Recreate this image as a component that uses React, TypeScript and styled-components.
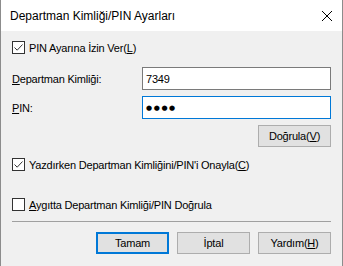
import React from "react";
import styled, { createGlobalStyle } from "styled-components";

const GlobalStyle = createGlobalStyle`
    html, body {
        margin: 0;
        padding: 0;
        background: #f0f0f0;
    }
    body {
        font-family: "Liberation Sans", Arial, sans-serif;
        color: #000;
    }
`;

const Window = styled.div`
    width: 343px;
    height: 266px;
    box-sizing: border-box;
    border-left: 1px solid #8c8c8c;
    border-right: 1px solid #8c8c8c;
    display: flex;
    flex-direction: column;
    overflow: hidden;
    background: #f0f0f0;
`;

const TitleBar = styled.div`
    height: 31px;
    flex-shrink: 0;
    background: #fff;
    display: flex;
    align-items: center;
    justify-content: space-between;
    padding: 0 10px 0 9px;
`;

const Title = styled.span`
    font-size: 12px;
`;

const CloseButton = styled.div`
    width: 10px;
    height: 10px;
    display: flex;
`;

const Body = styled.div`
    flex: 1;
    display: flex;
    flex-direction: column;
    padding: 0 11px;
`;

const Text = styled.span`
    font-size: 11px;
    letter-spacing: -0.2px;
    white-space: nowrap;
`;

const CheckRow = styled.label<{ $top: number }>`
    display: flex;
    align-items: center;
    gap: 4px;
    height: 13px;
    margin-top: ${(p) => p.$top}px;
`;

const Box = styled.span`
    width: 13px;
    height: 13px;
    box-sizing: border-box;
    border: 1px solid #333;
    background: #fff;
    display: flex;
`;

const FieldRow = styled.div<{ $top: number }>`
    display: grid;
    grid-template-columns: 130px 1fr;
    align-items: center;
    margin-top: ${(p) => p.$top}px;
`;

const TextBox = styled.div<{ $focused?: boolean }>`
    height: 23px;
    box-sizing: border-box;
    border: 1px solid ${(p) => (p.$focused ? "#0078d7" : "#7a7a7a")};
    background: #fff;
    display: flex;
    align-items: center;
    padding-left: 3px;
`;

const Dots = styled.span`
    font-family: "DejaVu Sans", sans-serif;
    font-size: 7px;
    letter-spacing: 1.6px;
`;

const ButtonRow = styled.div<{ $top: number }>`
    display: flex;
    justify-content: flex-end;
    gap: 8px;
    margin-top: ${(p) => p.$top}px;
`;

const Button = styled.button<{ $default?: boolean }>`
    width: 73px;
    height: 22px;
    box-sizing: border-box;
    padding: 0;
    margin: 0;
    background: #e1e1e1;
    border: ${(p) => (p.$default ? "2px solid #0078d7" : "1px solid #adadad")};
    border-radius: 0;
    font-family: "Liberation Sans", Arial, sans-serif;
    font-size: 11px;
    letter-spacing: -0.2px;
    color: #000;
`;

const Separator = styled.div`
    height: 1px;
    background: #a0a0a0;
    margin-top: 10px;
`;

const Check = () => (
    <svg width="11" height="11" viewBox="0 0 11 11">
        <path d="M1.5 5.5 L4.2 8.2 L9.5 2.5" fill="none" stroke="#333" strokeWidth="1" />
    </svg>
);

const CheckBox = ({ checked }: { checked?: boolean }) => <Box>{checked && <Check />}</Box>;

export default function App() {
    return (
        <>
            <GlobalStyle />
            <Window>
                <TitleBar>
                    <Title>Departman Kimliği/PIN Ayarları</Title>
                    <CloseButton>
                        <svg width="10" height="10" viewBox="0 0 10 10">
                            <path d="M0 0 L10 10 M10 0 L0 10" stroke="#000" strokeWidth="1" />
                        </svg>
                    </CloseButton>
                </TitleBar>
                <Body>
                    <CheckRow $top={10}>
                        <CheckBox checked />
                        <Text>
                            PIN Ayarına İzin Ver(<u>L</u>)
                        </Text>
                    </CheckRow>
                    <FieldRow $top={13}>
                        <Text>
                            <u>D</u>epartman Kimliği:
                        </Text>
                        <TextBox>
                            <Text>7349</Text>
                        </TextBox>
                    </FieldRow>
                    <FieldRow $top={6}>
                        <Text>
                            <u>P</u>IN:
                        </Text>
                        <TextBox $focused>
                            <Dots>●●●●</Dots>
                        </TextBox>
                    </FieldRow>
                    <ButtonRow $top={6}>
                        <Button>
                            Doğrula(<u>V</u>)
                        </Button>
                    </ButtonRow>
                    <CheckRow $top={11}>
                        <CheckBox checked />
                        <Text>
                            Yazdırken Departman Kimliğini/PIN'i Onayla(<u>C</u>)
                        </Text>
                    </CheckRow>
                    <CheckRow $top={27}>
                        <CheckBox />
                        <Text>
                            <u>A</u>ygıtta Departman Kimliği/PIN Doğrula
                        </Text>
                    </CheckRow>
                    <Separator />
                    <ButtonRow $top={10}>
                        <Button $default>Tamam</Button>
                        <Button>İptal</Button>
                        <Button>
                            Yardım(<u>H</u>)
                        </Button>
                    </ButtonRow>
                </Body>
            </Window>
        </>
    );
}
